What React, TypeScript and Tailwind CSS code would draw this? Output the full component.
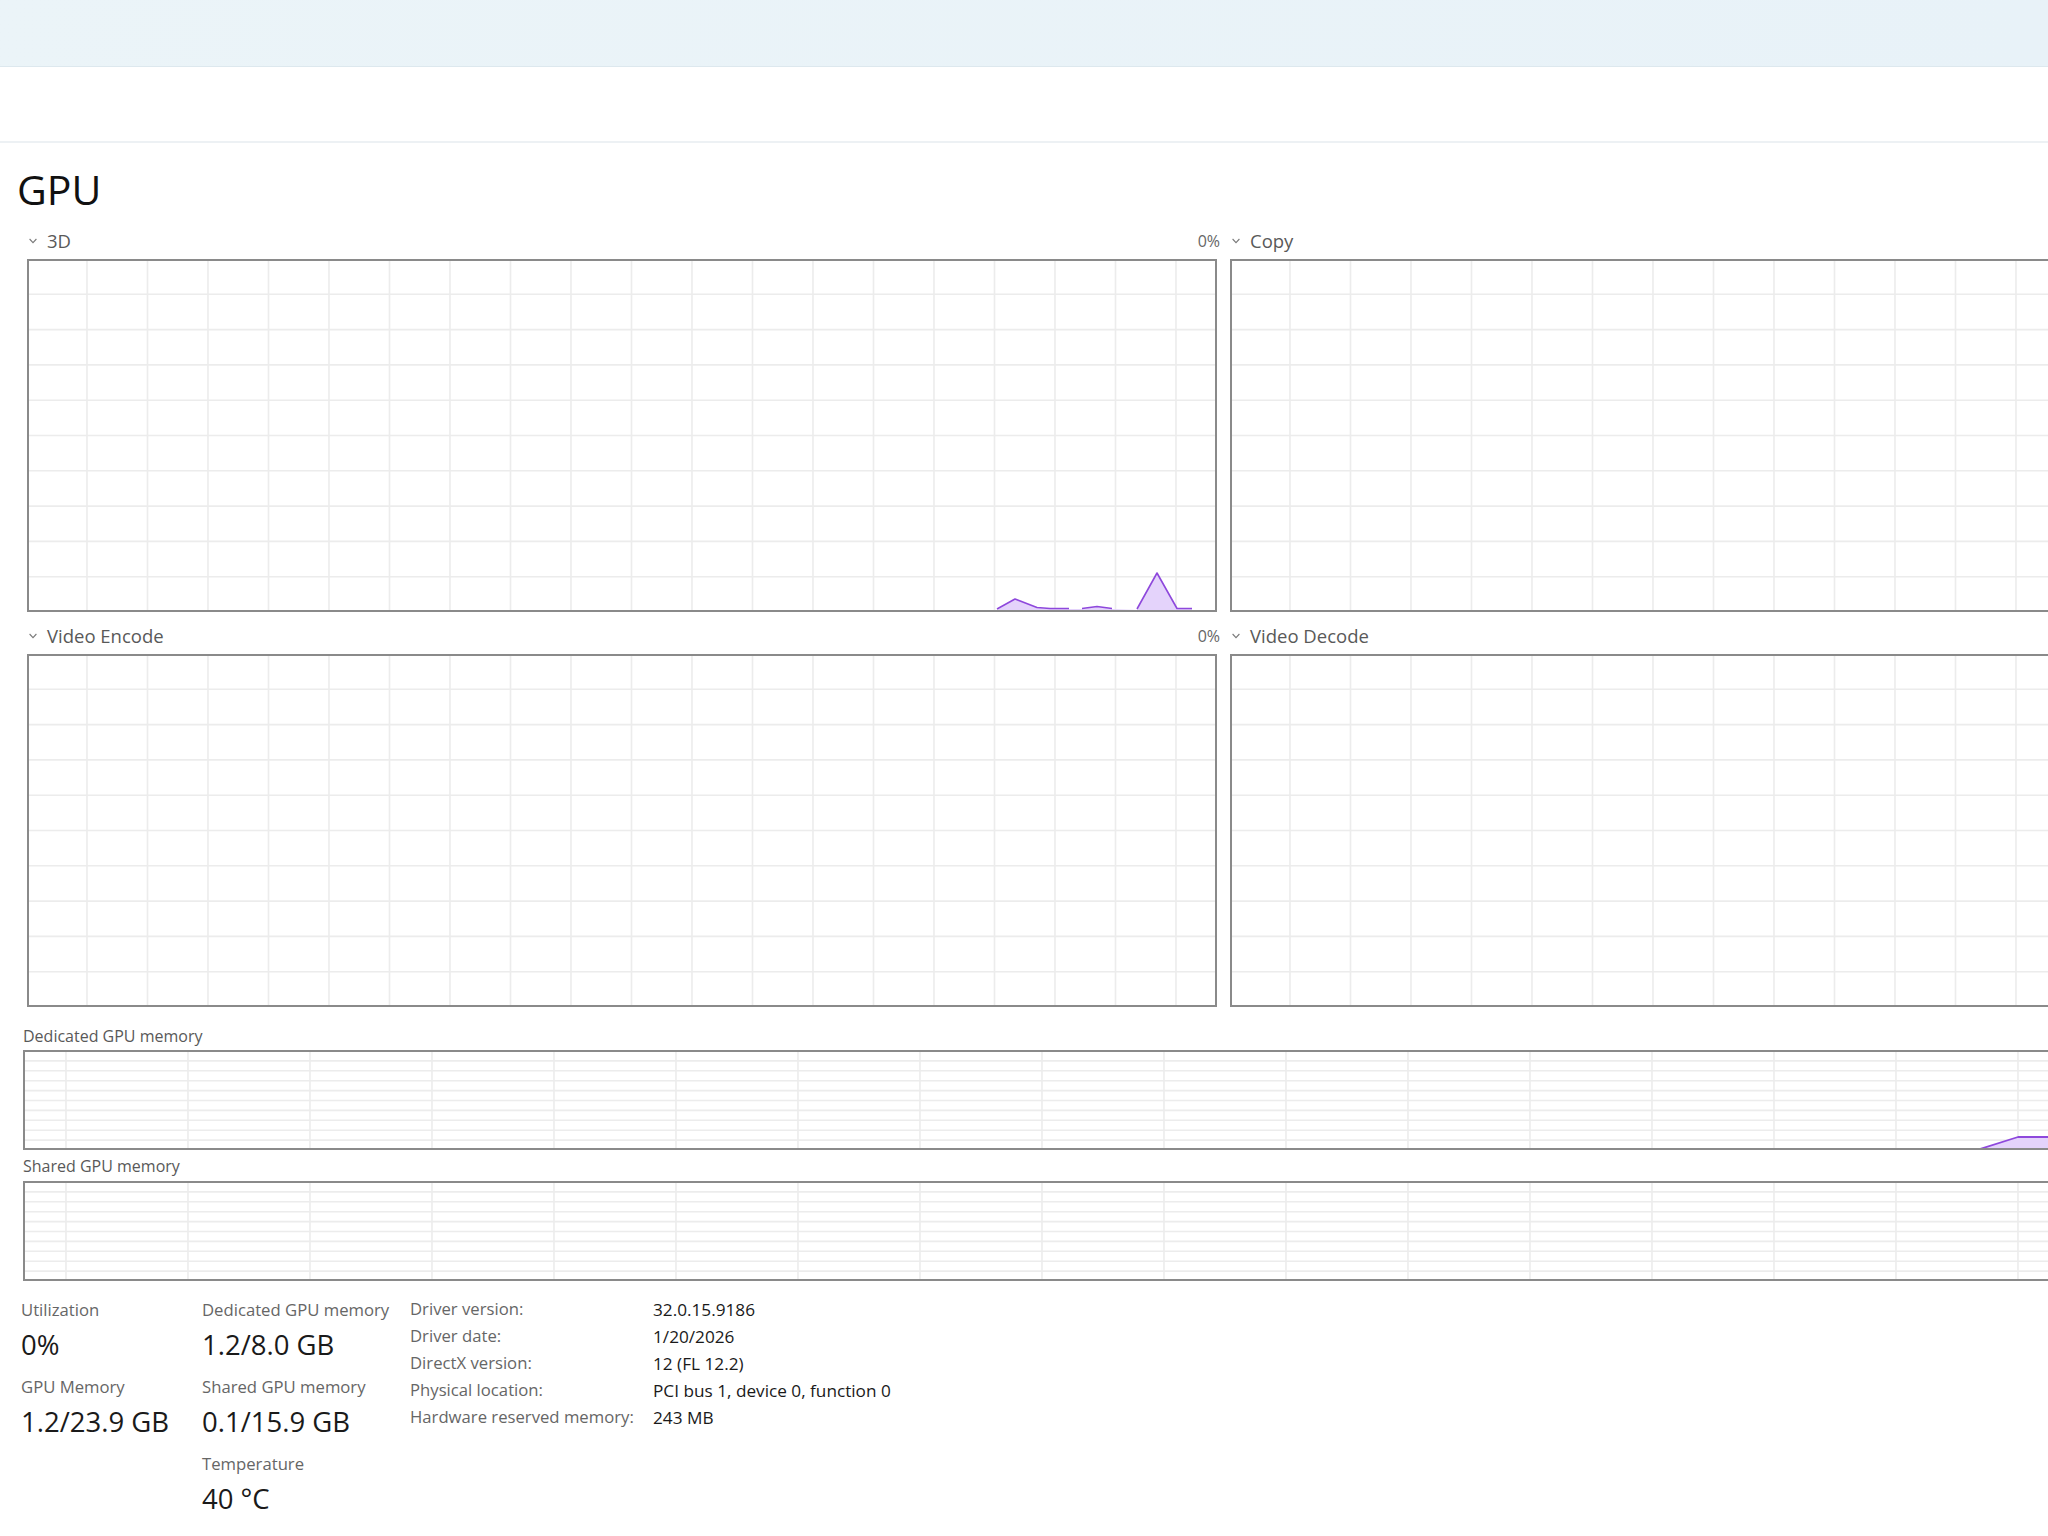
import React from "react";

const FONT = { fontFamily: '"Open Sans", "Noto Sans", "Liberation Sans", sans-serif' };

function Chevron() {
  return (
    <svg width="8" height="6" viewBox="0 0 8 6" className="block">
      <path d="M0.6 1 L4 4.6 L7.4 1" fill="none" stroke="#7a7a7a" strokeWidth="1.1" />
    </svg>
  );
}

type Spike = { line: string; fill: string };

function SmallGraph({ spike }: { spike?: Spike }) {
  const W = 1186;
  const H = 349;
  const vs: number[] = [];
  for (let x = 58; x < W; x += 60.5) vs.push(x);
  const hs: number[] = [];
  for (let k = 1; k <= 9; k++) hs.push(35.3 * k - 2);
  return (
    <div className="w-[1190px] h-[353px] border-2 border-[#8a8a8a] bg-white">
      <svg width={W} height={H} className="block">
        {vs.map((x) => (
          <line key={"v" + x} x1={x} y1={0} x2={x} y2={H} stroke="#ececec" strokeWidth="1.6" />
        ))}
        {hs.map((y) => (
          <line key={"h" + y} x1={0} y1={y} x2={W} y2={y} stroke="#ececec" strokeWidth="1.6" />
        ))}
        {spike && (
          <>
            <path d={spike.fill} fill="#e4d3fb" stroke="none" />
            <path d={spike.line} fill="none" stroke="#8e48dc" strokeWidth="1.6" strokeLinejoin="round" />
          </>
        )}
      </svg>
    </div>
  );
}

function MemGraph({ spike }: { spike?: Spike }) {
  const W = 2394;
  const H = 96;
  const vs: number[] = [];
  for (let x = 41; x < W; x += 122) vs.push(x);
  const hs: number[] = [];
  for (let k = 1; k <= 9; k++) hs.push(9.9 * k - 1);
  return (
    <div className="w-[2398px] h-[100px] border-2 border-[#8a8a8a] bg-white">
      <svg width={W} height={H} className="block">
        {vs.map((x) => (
          <line key={"v" + x} x1={x} y1={0} x2={x} y2={H} stroke="#ececec" strokeWidth="1.6" />
        ))}
        {hs.map((y) => (
          <line key={"h" + y} x1={0} y1={y} x2={W} y2={y} stroke="#ececec" strokeWidth="1.6" />
        ))}
        {spike && (
          <>
            <path d={spike.fill} fill="#e4d3fb" stroke="none" />
            <path d={spike.line} fill="none" stroke="#8e48dc" strokeWidth="1.8" strokeLinejoin="round" />
          </>
        )}
      </svg>
    </div>
  );
}

function GraphHeader({ label, pct }: { label: string; pct?: string }) {
  return (
    <div className="h-[26px] mb-[5px] flex items-center justify-between mr-[-3px]">
      <div className="flex items-center pl-[2px]">
        <Chevron />
        <span className="ml-[10px] text-[18.5px] leading-none text-[#595959]">{label}</span>
      </div>
      {pct && <span className="text-[16px] leading-none text-[#666666]">{pct}</span>}
    </div>
  );
}

function Stat({ label, value, last }: { label: string; value: string; last?: boolean }) {
  return (
    <div className={last ? "" : "mb-[14px]"}>
      <div className="h-[22px] flex items-center text-[16.7px] leading-none text-[#666666]">{label}</div>
      <div className="h-[34px] mt-[7px] flex items-center text-[27.5px] leading-none text-[#1a1a1a]">{value}</div>
    </div>
  );
}

const spike3D: Spike = {
  line:
    "M968 348 L986 338 L1008 346.5 L1021 347.5 L1040 347.5 M1053 347.5 L1068 345.5 L1083 347.5 M1108 348 L1128 312 L1148 347.5 L1163 347.5",
  fill: "M968 349 L986 338 L1008 346.5 L1021 348 L1053 348 L1068 345.5 L1083 348 L1108 349 L1128 312 L1148 348 L1163 348 L1163 349 Z",
};

const spikeMem: Spike = {
  line: "M1955 97 L1993 85 L2394 85",
  fill: "M1955 97 L1993 85 L2394 85 L2394 96 L1955 96 Z",
};

const details: [string, string][] = [
  ["Driver version:", "32.0.15.9186"],
  ["Driver date:", "1/20/2026"],
  ["DirectX version:", "12 (FL 12.2)"],
  ["Physical location:", "PCI bus 1, device 0, function 0"],
  ["Hardware reserved memory:", "243 MB"],
];

export default function App() {
  return (
    <div className="w-[2048px] h-[1536px] overflow-hidden bg-white" style={FONT}>
      <div className="h-[67px] bg-gradient-to-r from-[#ebf4f8] to-[#e8f2f8] border-b border-[#dde8ee]" />
      <div className="h-[76px] bg-white border-b-2 border-[#edf1f4]" />

      <div className="pl-[17px] pt-[21px]">
        <div className="h-[50px] text-[41px] leading-[50px] text-[#111111]">GPU</div>
      </div>

      <div className="pl-[27px] mt-[14px]">
        <div className="grid grid-cols-[1190px_1190px] gap-x-[13px] gap-y-[11px]">
          <div>
            <GraphHeader label="3D" pct="0%" />
            <SmallGraph spike={spike3D} />
          </div>
          <div>
            <GraphHeader label="Copy" />
            <SmallGraph />
          </div>
          <div>
            <GraphHeader label="Video Encode" pct="0%" />
            <SmallGraph />
          </div>
          <div>
            <GraphHeader label="Video Decode" />
            <SmallGraph />
          </div>
        </div>
      </div>

      <div className="pl-[23px] mt-[18px]">
        <div className="h-[22px] mb-[3px] flex items-center text-[16px] leading-none text-[#595959]">
          Dedicated GPU memory
        </div>
        <MemGraph spike={spikeMem} />
        <div className="h-[22px] mt-[5px] mb-[4px] flex items-center text-[16px] leading-none text-[#595959]">
          Shared GPU memory
        </div>
        <MemGraph />
      </div>

      <div className="mt-[15px] pl-[21px] flex">
        <div className="w-[181px] pt-[3px]">
          <Stat label="Utilization" value="0%" />
          <Stat label="GPU Memory" value="1.2/23.9 GB" last />
        </div>
        <div className="w-[208px] pt-[3px]">
          <Stat label="Dedicated GPU memory" value="1.2/8.0 GB" />
          <Stat label="Shared GPU memory" value="0.1/15.9 GB" />
          <Stat label="Temperature" value="40 °C" last />
        </div>
        <div className="flex flex-col">
          {details.map(([k, v]) => (
            <div key={k} className="h-[27px] flex items-center leading-none">
              <span className="w-[243px] text-[16.7px] text-[#666666]">{k}</span>
              <span className="text-[17.2px] text-[#1a1a1a]">{v}</span>
            </div>
          ))}
        </div>
      </div>
    </div>
  );
}
